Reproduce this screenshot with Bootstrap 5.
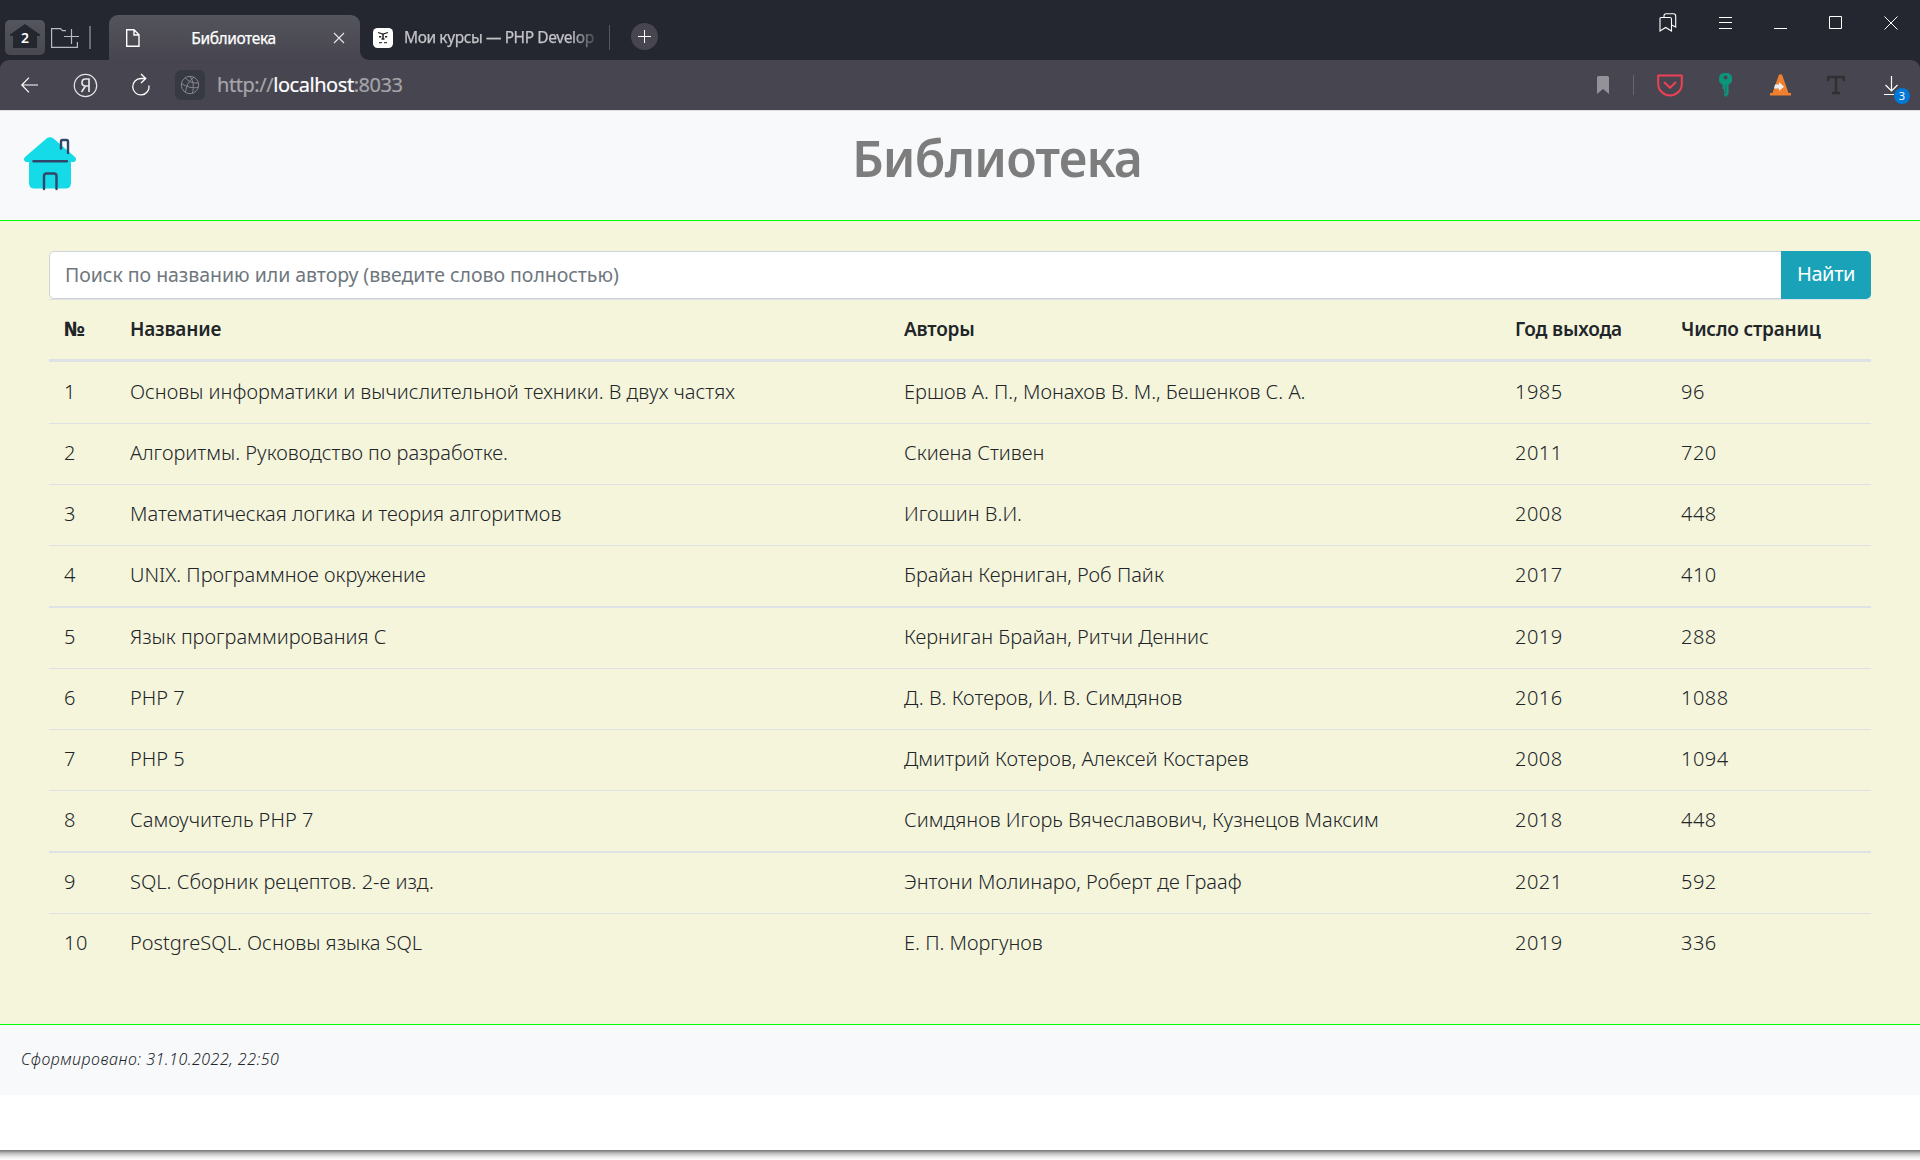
<!DOCTYPE html>
<html lang="ru">
<head>
<meta charset="utf-8">
<meta name="viewport" content="width=device-width, initial-scale=1">
<title>Библиотека</title>
<link href="https://cdn.jsdelivr.net/npm/bootstrap@5.3.0/dist/css/bootstrap.min.css" rel="stylesheet">
<style>
  body { font-family: "Noto Sans", sans-serif; font-size: 20px; color: #212529; background: #fff; height: 1160px; overflow: hidden; }
  svg { display: block; flex: none; }
  .tabstrip { height: 60px; background: #252730; padding-left: 5px; }
  .home-btn { width: 40px; height: 35px; margin-top: 20px; border-radius: 5px; background: linear-gradient(#55555e, #484850); }
  .strip-icon { margin: 27px 0 0 6px; }
  .strip-sep { width: 2px; height: 23px; margin: 26px 0 0 10px; background: #6b6c75; }
  .tab-active { width: 251px; height: 45px; margin: 15px 0 0 18px; padding: 0 15px 0 17px; border-radius: 9px 9px 0 0; background: linear-gradient(#54545c, #474650); color: #fff; }
  .tab-active .tab-label { padding-right: 6px; }
  .tab-label { font-size: 15.5px; letter-spacing: -.4px; line-height: 22px; -webkit-text-stroke: .25px currentColor; white-space: nowrap; }
  .tab-next { width: 250px; height: 45px; padding-left: 13px; background: #252730; border-bottom-left-radius: 9px; color: #c2c3c7; }
  .tab-wedge { margin-top: 15px; background: linear-gradient(#252730 50%, #474650 50%); }
  .tab-clip { width: 195px; margin-left: 3px; padding-bottom: 2px; -webkit-mask-image: linear-gradient(90deg, #000 86%, transparent 101%); mask-image: linear-gradient(90deg, #000 86%, transparent 101%); }
  .tab-sep { width: 1px; height: 25px; margin-top: 25px; margin-left: -1px; background: #55565e; }
  .tab-plus { width: 27px; height: 27px; margin: 23px 0 0 21px; background: #474650; border-radius: 50%; }
  .win-btns { margin-right: 22px; height: 45px; }
  .win-gap { margin-left: 42px; }
  .toolbar-back { background: #252730; }
  .addressbar { height: 50px; background: #474650; border-radius: 9px 9px 0 0; padding: 0 11px 0 20px; }
  .globe { width: 30px; height: 30px; border-radius: 6px; background: #373943; margin-left: 24px; }
  .url { font-size: 20px; letter-spacing: -.45px; color: #a5a5aa; margin-left: 12px; -webkit-text-stroke: .2px currentColor; line-height: 30px; }
  .url span { color: #fff; }
  .page-head { height: 111px; background: #f8f9fb; border-top: 1px solid #dcdee2; border-bottom: 1px solid #0f0; padding-left: 22px; }
  .page-title { font-size: 50px; font-weight: 600; letter-spacing: -.8px; line-height: 60px; color: #7d7d7d; margin: 17px 0 0; padding-right: 4px; }
  .page-main { height: 803px; background: #f5f5dc; padding: 30px 49px 0; }
  .search-group { height: 48px; }
  .search-group .form-control { font-size: 19.5px; letter-spacing: -.04px; padding: 0 15px; border: 1px solid #ced4da; border-radius: 5px 0 0 5px; }
  .search-group .form-control::placeholder { color: #6f777e; }
  .search-group .btn { width: 90px; padding: 0 0 2px; font-size: 20px; letter-spacing: -.4px; color: #fff; background: #19a2b8; border: 0; border-radius: 0 5px 5px 0; }
  .books { table-layout: fixed; width: 1822px; margin: 0; --bs-table-bg: transparent; }
  .books tr > * { height: 61px; padding: 0 15px 2px; vertical-align: middle; border: 0 solid #dee2e6; border-top-width: 1px; line-height: 30px; color: #212529; }
  .books thead th { height: 61px; padding-bottom: 2px; font-size: 19px; font-weight: 600; letter-spacing: -.2px; }
  .books thead th:first-child { font-weight: 800; font-size: 20px; }
  .books tbody td { font-weight: 350; letter-spacing: .01px; }
  .books tbody td:first-child, .books tbody td:nth-child(n+4) { letter-spacing: .5px; }
  .books tbody tr:first-child td { border-top-width: 3px; height: 63px; }
  .books tbody tr.wide-line td { border-top-width: 2px; height: 62px; }
  .page-foot { height: 71px; background: #f8f9fb; border-top: 1px solid #0f0; padding: 22px 21px 0; font-size: 16px; line-height: 24px; font-style: italic; font-weight: 350; letter-spacing: .5px; }
  .blank-area { height: 55px; }
  .window-edge { height: 10px; background: linear-gradient(#777 0, #8e8e8e 12%, #c0c0c0 35%, #ececec 70%, #fff 100%); }
  .dl-count { width: 16px; height: 16px; font-size: 11px; line-height: 16px; background: #0078d7; color: #fff; left: 12px; top: 16px; }
</style>
<script src="https://cdn.jsdelivr.net/npm/bootstrap@5.3.0/dist/js/bootstrap.bundle.min.js"></script>
</head>
<body>
<div class="tabstrip d-flex align-items-start">
  <div class="home-btn">
    <svg width="40" height="35" viewBox="0 0 40 35"><path d="M20 4L35 14.5V16h-3v12H8V16H5v-1.500z" fill="#252730"/><text x="20" y="22.500" text-anchor="middle" font-family="Noto Sans" font-size="14" font-weight="600" fill="#fff">2</text></svg>
  </div>
  <svg class="strip-icon" width="28" height="22" viewBox="0 0 28 22" fill="none" stroke="#b9bac0" stroke-width="1.200"><path d="M15 3.600h-3.500L9.500 1.600H.6V20.400H26.400V15M13 9.500h15M20.500 2v15"/></svg>
  <div class="strip-sep"></div>
  <div class="tab-active d-flex align-items-center">
    <svg width="14" height="18" viewBox="0 0 14 18" fill="none" stroke="#fff" stroke-width="1.400"><path d="M.7.7H8L13 5.700V17.300H.7zM8 .7V6h5"/></svg>
    <span class="tab-label flex-fill text-center">Библиотека</span>
    <svg width="12" height="12" viewBox="0 0 12 12" stroke="#e8e8ea" stroke-width="1.100"><path d="M1 1l10 10M11 1L1 11"/></svg>
  </div>
  <div class="tab-wedge">
    <div class="tab-next d-flex align-items-center gap-2">
      <svg width="20" height="20" viewBox="0 0 20 20"><rect width="20" height="20" rx="4.500" fill="#fff"/><path d="M5 4.500l5 1.500 5-1.500" stroke="#222" stroke-width="1.200" fill="none"/><path d="M10 6v5M8.500 11h3" stroke="#222" stroke-width="1.500"/><path d="M6 8.700h2.200M12 8.700h2.200" stroke="#222" stroke-width="1.600"/><path d="M6 14.700h3M11 14.700h3" stroke="#444" stroke-width="1.300"/></svg>
      <div class="tab-clip tab-label">Мои курсы — PHP Develop</div>
    </div>
  </div>
  <div class="tab-sep"></div>
  <div class="tab-plus d-flex align-items-center justify-content-center">
    <svg width="13" height="13" viewBox="0 0 13 13" stroke="#fff"><path d="M0 6.500h13M6.500 0v13"/></svg>
  </div>
  <div class="win-btns d-flex align-items-center ms-auto">
    <svg width="18" height="19" viewBox="0 0 18 19" fill="none" stroke="#fff" stroke-width="1.100"><path d="M1 5.500Q1 4.500 2 4.500H11Q12.500 4.500 12.500 6V18L6.700 14.500 1 18zM5 4.500V3Q5 .7 7 .7h7.500Q16.700.7 16.700 3V14l-4-2"/></svg>
    <svg class="win-gap" width="13" height="12" viewBox="0 0 13 12" stroke="#fff"><path d="M0 .5h13M0 5.500h13M0 11.500h13"/></svg>
    <svg class="win-gap" width="13" height="13" viewBox="0 0 13 13" stroke="#fff"><path d="M0 12.500h13"/></svg>
    <svg class="win-gap" width="13" height="13" viewBox="0 0 13 13" fill="none" stroke="#fff"><path d="M.5.5h12v12H.5z"/></svg>
    <svg class="win-gap" width="14" height="14" viewBox="0 0 14 14" stroke="#fff"><path d="M.5.5l13 13M13.500.5l-13 13"/></svg>
  </div>
</div>
<div class="toolbar-back">
  <div class="addressbar d-flex align-items-center">
    <svg width="20" height="16" viewBox="0 0 20 16" fill="none" stroke="#fff" stroke-width="1.200"><path d="M18 8H1.500M9 .7L1.800 8 9 15.300"/></svg>
    <svg style="margin-left:33px" width="25" height="25" viewBox="0 0 25 25" fill="none" stroke="#e6e6e8"><circle cx="12.500" cy="12.500" r="11.200" stroke-width="1.200"/><path d="M16 19V6h-3.500Q9 6 9 9.500T12.500 13H16M12.500 13L8.500 19" stroke-width="1.700"/></svg>
    <svg style="margin-left:33px" width="20" height="24" viewBox="0 0 20 24" fill="none" stroke="#fff" stroke-width="1.300"><path d="M18 12.500A8.200 8.200 0 1 1 10 5.500H14M10 1l4.800 4.500L10 10"/></svg>
    <div class="globe d-flex align-items-center justify-content-center">
      <svg width="20" height="20" viewBox="0 0 20 20" fill="none" stroke="#85868e" stroke-width="1"><circle cx="10" cy="10" r="8.700"/><path d="M14 2.200Q6 8 5.500 17.500M10 1.300Q15 8 12.500 18.300M1.500 8.500Q10 14 18 12.500M5.500 2.800Q9 8.500 18 8"/></svg>
    </div>
    <div class="url">http://<span>localhost</span>:8033</div>
    <svg class="ms-auto" width="12" height="18" viewBox="0 0 12 18"><path d="M0 1.500Q0 0 1.500 0h9Q12 0 12 1.500V18L6 13 0 18z" fill="#929298"/></svg>
    <svg style="margin-left:24px" width="1" height="20"><path d="M.5 0v20" stroke="#66666f"/></svg>
    <svg style="margin-left:23px" width="26" height="23" viewBox="0 0 26 23" fill="none" stroke="#ef4056" stroke-width="2" stroke-linecap="round" stroke-linejoin="round"><path d="M1.200 1.500H24.800V10A11.800 11.400 0 0 1 1.200 10zM7.500 8.500L13 13.800 18.500 8.500"/></svg>
    <svg style="margin-left:36px" width="13" height="24" viewBox="0 0 13 24"><path d="M6.500 0A6 6 0 0 1 9.500 11.500V21L7 24 4.500 21.500 6 20 4.500 18.500 5.500 17 3.500 15.500V11.500A6 6 0 0 1 6.500 0z" fill="#0b957b"/><circle cx="6.500" cy="4.500" r="2" fill="#474650"/><path d="M6.700 12v9" stroke="#37665f"/></svg>
    <svg style="margin-left:38px" width="21" height="22" viewBox="0 0 21 22"><path d="M9 .5h3L18.500 19H21v2.500H0V19H2.500z" fill="#f08030"/><path d="M5 10.500H9V8l5 4.800L9 17v-2.500H4z" fill="#eee"/></svg>
    <svg style="margin-left:36px" width="18" height="20" viewBox="0 0 18 20" fill="none" stroke="#303033" stroke-width="2.500"><path d="M1.200 6V2h15.600V6M9 2v16M5 18h8"/></svg>
    <div class="position-relative" style="margin-left:37px">
      <svg width="27" height="26" viewBox="0 0 27 26" fill="none" stroke="#fff" stroke-width="1.200"><path d="M9.500 4V19M3.500 13l6 6 6-6M2 22.500H12"/></svg>
      <span class="dl-count position-absolute rounded-circle text-center">3</span>
    </div>
  </div>
</div>
<header class="page-head d-flex align-items-start">
  <svg style="margin-top:26px" width="56" height="54" viewBox="0 0 56 54">
    <path d="M24.500 1.500Q28 -1 31.500 1.500L53 20Q55.500 23.500 52 25H49V46Q49 51.500 43.500 51.500H12.500Q7 51.500 7 46V25H4Q.5 23.500 3 20z" fill="#14dbe7"/>
    <g fill="none" stroke="#30466a" stroke-width="2.400" stroke-linecap="round"><path d="M11.500 24.200H45M22 52V39Q22 36.500 24.500 36.500H32Q34.500 36.500 34.500 39V52M39 11.500V4.500Q39 3 40.500 3H44.500Q46 3 46 4.500V16"/></g>
  </svg>
  <h1 class="page-title flex-fill text-center">Библиотека</h1>
</header>
<main class="page-main">
  <div class="input-group search-group">
    <input type="text" class="form-control" placeholder="Поиск по названию или автору (введите слово полностью)">
    <button class="btn" type="button">Найти</button>
  </div>
  <table class="table books">
    <colgroup><col style="width:66px"><col style="width:774px"><col style="width:611px"><col style="width:166px"><col style="width:205px"></colgroup>
    <thead><tr><th>№</th><th>Название</th><th>Авторы</th><th>Год выхода</th><th>Число страниц</th></tr></thead>
    <tbody>
      <tr><td>1</td><td>Основы информатики и вычислительной техники. В двух частях</td><td>Ершов А. П., Монахов В. М., Бешенков С. А.</td><td>1985</td><td>96</td></tr>
      <tr><td>2</td><td>Алгоритмы. Руководство по разработке.</td><td>Скиена Стивен</td><td>2011</td><td>720</td></tr>
      <tr><td>3</td><td>Математическая логика и теория алгоритмов</td><td>Игошин В.И.</td><td>2008</td><td>448</td></tr>
      <tr><td>4</td><td>UNIX. Программное окружение</td><td>Брайан Керниган, Роб Пайк</td><td>2017</td><td>410</td></tr>
      <tr class="wide-line"><td>5</td><td>Язык программирования C</td><td>Керниган Брайан, Ритчи Деннис</td><td>2019</td><td>288</td></tr>
      <tr><td>6</td><td>PHP 7</td><td>Д. В. Котеров, И. В. Симдянов</td><td>2016</td><td>1088</td></tr>
      <tr><td>7</td><td>PHP 5</td><td>Дмитрий Котеров, Алексей Костарев</td><td>2008</td><td>1094</td></tr>
      <tr><td>8</td><td>Самоучитель PHP 7</td><td>Симдянов Игорь Вячеславович, Кузнецов Максим</td><td>2018</td><td>448</td></tr>
      <tr class="wide-line"><td>9</td><td>SQL. Сборник рецептов. 2-е изд.</td><td>Энтони Молинаро, Роберт де Грааф</td><td>2021</td><td>592</td></tr>
      <tr><td>10</td><td>PostgreSQL. Основы языка SQL</td><td>Е. П. Моргунов</td><td>2019</td><td>336</td></tr>
    </tbody>
  </table>
</main>
<footer class="page-foot">Сформировано: 31.10.2022, 22:50</footer>
<div class="blank-area"></div>
<div class="window-edge"></div>
</body>
</html>
